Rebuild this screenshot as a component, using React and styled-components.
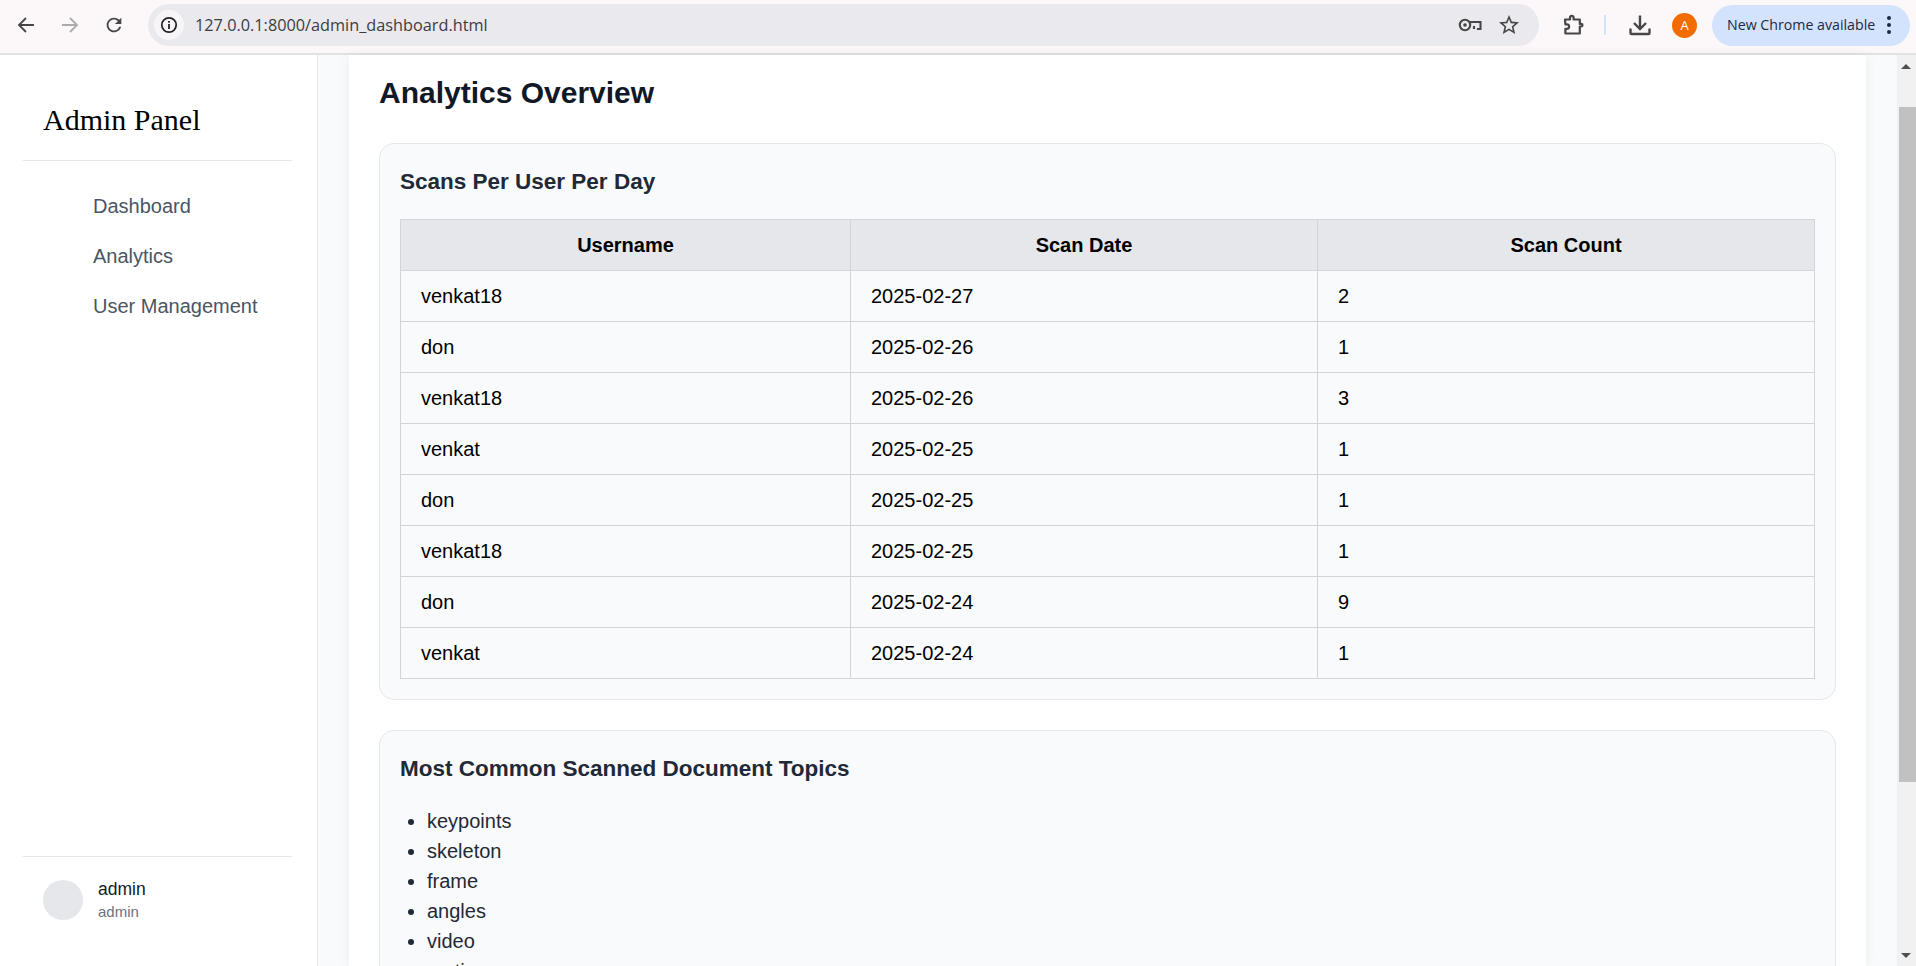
import React from 'react';
import styled, { createGlobalStyle } from 'styled-components';

const scans = [
  ['venkat18', '2025-02-27', 2],
  ['don', '2025-02-26', 1],
  ['venkat18', '2025-02-26', 3],
  ['venkat', '2025-02-25', 1],
  ['don', '2025-02-25', 1],
  ['venkat18', '2025-02-25', 1],
  ['don', '2025-02-24', 9],
  ['venkat', '2025-02-24', 1],
];

const topics = ['keypoints', 'skeleton', 'frame', 'angles', 'video', 'motion'];

const navItems = ['Dashboard', 'Analytics', 'User Management'];

const App = () => {
  return (
    <>
      <GlobalStyle />
      <Window>
        <Toolbar>
          <NavButton>
            <svg width='24' height='24' viewBox='0 0 24 24' fill='none' stroke='#474747' strokeWidth='1.8'>
              <path d='M20 12H5M12 5l-7 7 7 7' />
            </svg>
          </NavButton>
          <NavButton>
            <svg width='24' height='24' viewBox='0 0 24 24' fill='none' stroke='#ababab' strokeWidth='1.8'>
              <path d='M4 12h15M12 5l7 7-7 7' />
            </svg>
          </NavButton>
          <NavButton>
            <svg width='22' height='22' viewBox='0 0 24 24' fill='#474747'>
              <path d='M17.65 6.35A7.958 7.958 0 0 0 12 4c-4.42 0-7.99 3.58-7.99 8s3.57 8 7.99 8c3.73 0 6.84-2.55 7.73-6h-2.08A5.99 5.99 0 0 1 12 18c-3.31 0-6-2.69-6-6s2.69-6 6-6c1.66 0 3.14.69 4.22 1.78L13 11h7V4l-2.35 2.35z' />
            </svg>
          </NavButton>
          <Omnibox>
            <InfoChip>
              <svg width='18' height='18' viewBox='0 0 18 18' fill='none' stroke='#222'>
                <circle cx='9' cy='9' r='7.2' strokeWidth='1.7' />
                <path d='M9 8v5M9 5v1.8' strokeWidth='1.8' />
              </svg>
            </InfoChip>
            <Url>127.0.0.1:8000/admin_dashboard.html</Url>
            <OmniIcons>
              <svg width='24' height='16' viewBox='0 0 24 16' fill='none' stroke='#474747' strokeWidth='2.1'>
                <circle cx='7' cy='8' r='5.2' />
                <circle cx='7' cy='8' r='1.8' fill='#474747' stroke='none' />
                <path d='M12 5h10.5v7h-3.6M16 9v3' />
              </svg>
              <svg width='24' height='24' viewBox='0 0 24 24' fill='#474747'>
                <path d='M22 9.24l-7.19-.62L12 2 9.19 8.63 2 9.24l5.46 4.73L5.82 21 12 17.27 18.18 21l-1.63-7.03L22 9.24zM12 15.4l-3.76 2.27 1-4.28-3.32-2.88 4.38-.38L12 6.1l1.71 4.04 4.38.38-3.32 2.88 1 4.28L12 15.4z' />
              </svg>
            </OmniIcons>
          </Omnibox>
          <ToolButton>
            <svg width='24' height='24' viewBox='0 0 24 24' fill='none' stroke='#474747' strokeWidth='2.2' strokeLinejoin='round'>
              <path d='M4 6.5h5V4.6a1.8 1.8 0 0 1 3.6 0v1.9h6.2v4.4h1.4a1.3 1.3 0 0 1 0 2.6h-1.4v7H4.4v-4.6h1.4a2.3 2.3 0 0 0 0-4.6H4.4z' />
            </svg>
          </ToolButton>
          <ToolDivider />
          <ToolButton>
            <svg width='24' height='24' viewBox='0 0 24 24' fill='none' stroke='#474747' strokeWidth='2.4'>
              <path d='M12 2.5v13M6 10l6 6 6-6' />
              <path d='M2.5 16.5v3.2c0 .8.6 1.3 1.3 1.3h16.4c.7 0 1.3-.5 1.3-1.3v-3.2' strokeLinecap='round' />
            </svg>
          </ToolButton>
          <ProfileBadge>A</ProfileBadge>
          <UpdatePill>
            <PillLabel>New Chrome available</PillLabel>
            <PillDots>
              <i />
              <i />
              <i />
            </PillDots>
          </UpdatePill>
        </Toolbar>

        <Body>
          <Sidebar>
            <Brand>Admin Panel</Brand>
            <NavList>
              {navItems.map((item) => (
                <NavLink key={item}>{item}</NavLink>
              ))}
            </NavList>
            <UserBox>
              <Avatar />
              <UserText>
                <UserName>admin</UserName>
                <UserRole>admin</UserRole>
              </UserText>
            </UserBox>
          </Sidebar>

          <Main>
            <Panel>
              <PageTitle>Analytics Overview</PageTitle>

              <Card>
                <CardTitle>Scans Per User Per Day</CardTitle>
                <ScanTable>
                  <colgroup>
                    <col style={{ width: 450 }} />
                    <col style={{ width: 467 }} />
                    <col />
                  </colgroup>
                  <thead>
                    <tr>
                      <HeadCell>Username</HeadCell>
                      <HeadCell>Scan Date</HeadCell>
                      <HeadCell>Scan Count</HeadCell>
                    </tr>
                  </thead>
                  <tbody>
                    {scans.map((row, i) => (
                      <tr key={i}>
                        <Cell>{row[0]}</Cell>
                        <Cell>{row[1]}</Cell>
                        <Cell>{row[2]}</Cell>
                      </tr>
                    ))}
                  </tbody>
                </ScanTable>
              </Card>

              <Card>
                <CardTitle>Most Common Scanned Document Topics</CardTitle>
                <TopicList>
                  {topics.map((topic) => (
                    <li key={topic}>{topic}</li>
                  ))}
                </TopicList>
              </Card>
            </Panel>
          </Main>

          <ScrollTrack>
            <ArrowUp />
            <ThumbLane>
              <ScrollThumb />
            </ThumbLane>
            <ArrowDown />
          </ScrollTrack>
        </Body>
      </Window>
    </>
  );
};

export default App;

const GlobalStyle = createGlobalStyle`
  html, body {
    margin: 0;
    padding: 0;
    height: 100%;
    overflow: hidden;
    background: #fff;
    font-family: 'Liberation Sans', Arial, sans-serif;
  }
`;

const Window = styled.div`
  display: flex;
  flex-direction: column;
  height: 966px;
  overflow: hidden;
`;

const Toolbar = styled.div`
  display: flex;
  align-items: center;
  flex: 0 0 55px;
  box-sizing: border-box;
  height: 55px;
  padding: 0 0 3px 4px;
  background: #fcf7f8;
  border-bottom: 2px solid #e3e1e2;
`;

const NavButton = styled.div`
  display: flex;
  align-items: center;
  justify-content: center;
  box-sizing: border-box;
  width: 44px;
  height: 42px;
  padding-bottom: 1px;
`;

const Omnibox = styled.div`
  display: flex;
  align-items: center;
  width: 1391px;
  height: 42px;
  margin-left: 12px;
  border-radius: 21px;
  background: #e9e9ee;
`;

const InfoChip = styled.div`
  display: flex;
  align-items: center;
  justify-content: center;
  width: 30px;
  height: 30px;
  margin-left: 6px;
  border-radius: 50%;
  background: #f7f5f8;
`;

const Url = styled.span`
  margin-left: 11px;
  font-family: 'Open Sans', sans-serif;
  font-size: 16.27px;
  color: #3c3c3f;
`;

const OmniIcons = styled.div`
  display: flex;
  align-items: center;
  gap: 15px;
  margin-left: auto;
  margin-right: 18px;
`;

const ToolButton = styled.div`
  display: flex;
  align-items: center;
  justify-content: center;
  box-sizing: border-box;
  width: 44px;
  height: 42px;
  margin-left: 12px;
  padding-bottom: 1px;
`;

const ToolDivider = styled.div`
  width: 2px;
  height: 20px;
  margin-left: 9px;
  background: #d3e3fd;
`;

const ProfileBadge = styled.div`
  display: flex;
  align-items: center;
  justify-content: center;
  width: 25px;
  height: 25px;
  margin-left: 10px;
  border-radius: 50%;
  background: #f36c00;
  color: #fff;
  font-family: 'Open Sans', sans-serif;
  font-size: 13px;
`;

const UpdatePill = styled.div`
  display: flex;
  align-items: center;
  box-sizing: border-box;
  width: 198px;
  height: 41px;
  margin-left: 15px;
  padding-left: 15px;
  border-radius: 21px;
  background: #d3e3fd;
  color: #1b2a42;
  font-family: 'Open Sans', sans-serif;
  font-size: 14.2px;
  white-space: nowrap;
`;

const PillLabel = styled.span`
  margin-bottom: 2px;
`;

const PillDots = styled.div`
  display: flex;
  flex-direction: column;
  gap: 3px;
  margin-left: 12px;

  & i {
    display: block;
    width: 4px;
    height: 4px;
    border-radius: 50%;
    background: #1b2a42;
  }
`;

const Body = styled.div`
  display: flex;
  flex: 1;
  min-height: 0;
`;

const Sidebar = styled.aside`
  display: flex;
  flex-direction: column;
  flex: 0 0 318px;
  box-sizing: border-box;
  padding: 48px 25px 44px 23px;
  background: #fff;
  border-right: 1px solid #e5e7eb;
`;

const Brand = styled.div`
  padding: 0 20px 23px;
  border-bottom: 1px solid #e5e7eb;
  font-family: 'Liberation Serif', 'Times New Roman', serif;
  font-size: 30px;
  line-height: 34px;
  color: #000;
`;

const NavList = styled.nav`
  display: flex;
  flex-direction: column;
  margin-top: 20px;
`;

const NavLink = styled.a`
  display: block;
  padding-left: 70px;
  font-size: 20px;
  line-height: 50px;
  color: #4b5563;
`;

const UserBox = styled.div`
  display: flex;
  align-items: center;
  gap: 15px;
  margin-top: auto;
  padding: 21px 20px 0;
  border-top: 1px solid #e5e7eb;
`;

const Avatar = styled.div`
  width: 40px;
  height: 40px;
  border-radius: 50%;
  background: #e5e7eb;
`;

const UserText = styled.div`
  display: flex;
  flex-direction: column;
`;

const UserName = styled.span`
  font-size: 17.5px;
  line-height: 23px;
  color: #111827;
`;

const UserRole = styled.span`
  font-size: 15px;
  line-height: 21px;
  color: #6b7280;
`;

const Main = styled.main`
  flex: 1;
  min-width: 0;
  padding: 0 31px;
  background: #f9fafb;
`;

const Panel = styled.section`
  height: 100%;
  box-sizing: border-box;
  padding: 20px 30px 0;
  overflow: hidden;
  background: #fff;
  box-shadow: 0 0 12px rgba(0, 0, 0, 0.06);
`;

const PageTitle = styled.h1`
  margin: 0 0 32px;
  font-size: 30px;
  line-height: 36px;
  font-weight: 700;
  color: #111827;
`;

const Card = styled.div`
  margin-bottom: 30px;
  padding: 20px;
  border: 1px solid #e5e7eb;
  border-radius: 15px;
  background: #f9fafb;
`;

const CardTitle = styled.h3`
  margin: 0 0 19px;
  font-size: 22.5px;
  line-height: 36px;
  font-weight: 700;
  color: #1f2937;
`;

const ScanTable = styled.table`
  width: 100%;
  border-collapse: collapse;
  table-layout: fixed;
  font-size: 20px;
  color: #000;
`;

const HeadCell = styled.th`
  height: 51px;
  box-sizing: border-box;
  padding: 0 20px;
  border: 1px solid #d1d5db;
  background: #e5e7eb;
  font-weight: 700;
  text-align: center;
`;

const Cell = styled.td`
  height: 51px;
  box-sizing: border-box;
  padding: 0 20px;
  border: 1px solid #d1d5db;
  text-align: left;
`;

const TopicList = styled.ul`
  margin: 0;
  padding-left: 27px;
  font-size: 20px;
  line-height: 30px;
  color: #1f2937;
`;

const ScrollTrack = styled.div`
  display: flex;
  flex-direction: column;
  align-items: flex-end;
  flex: 0 0 19px;
  background: #f1f1f1;
`;

const ThumbLane = styled.div`
  flex: 1;
  align-self: stretch;
`;

const ScrollThumb = styled.div`
  width: 17px;
  height: 675px;
  margin: 38px 0 0 2px;
  background: #c1c1c1;
`;

const ArrowUp = styled.div`
  width: 0;
  height: 0;
  margin: 9px 5px 0 0;
  border-left: 5px solid transparent;
  border-right: 5px solid transparent;
  border-bottom: 5px solid #505050;
`;

const ArrowDown = styled.div`
  width: 0;
  height: 0;
  margin: 0 5px 8px 0;
  border-left: 5px solid transparent;
  border-right: 5px solid transparent;
  border-top: 5px solid #505050;
`;
